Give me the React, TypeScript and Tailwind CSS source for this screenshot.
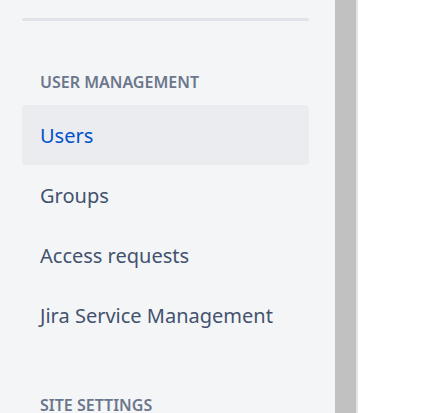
const items = [
  { label: 'Users', active: true },
  { label: 'Groups' },
  { label: 'Access requests' },
  { label: 'Jira Service Management' },
];

export default function App() {
  return (
    <div
      className="flex h-screen w-full overflow-hidden bg-white"
      style={{ fontFamily: '"Noto Sans", "Open Sans", sans-serif' }}
    >
      <aside className="w-[335px] shrink-0 bg-[#f4f5f7] pl-[22px] pr-[26px] pt-[18px]">
        <div className="h-[3px] w-full rounded-full bg-[#e1e3e8]" />

        <h2 className="mt-[51px] mb-[13px] pl-[18px] text-[16px] font-semibold uppercase leading-[20px] text-[#6b778c]">
          User management
        </h2>

        <nav className="flex flex-col">
          {items.map((item) => (
            <a
              key={item.label}
              href="#"
              className={
                item.active
                  ? 'flex h-[60px] items-center rounded-[4px] bg-[#ebecf0] pl-[18px] pt-[2px] text-[20px] text-[#0052cc]'
                  : 'flex h-[60px] items-center rounded-[4px] pl-[18px] pt-[2px] text-[20px] text-[#42526e]'
              }
            >
              {item.label}
            </a>
          ))}
        </nav>

        <h2 className="mt-[50px] pl-[18px] text-[16px] font-semibold uppercase leading-[20px] text-[#6b778c]">
          Site settings
        </h2>
      </aside>

      <div className="w-[21px] shrink-0 bg-[#c1c1c1]" />
      <div className="w-[2px] shrink-0 bg-[#e4e4e4]" />
      <main className="flex-1 bg-white" />
    </div>
  );
}
